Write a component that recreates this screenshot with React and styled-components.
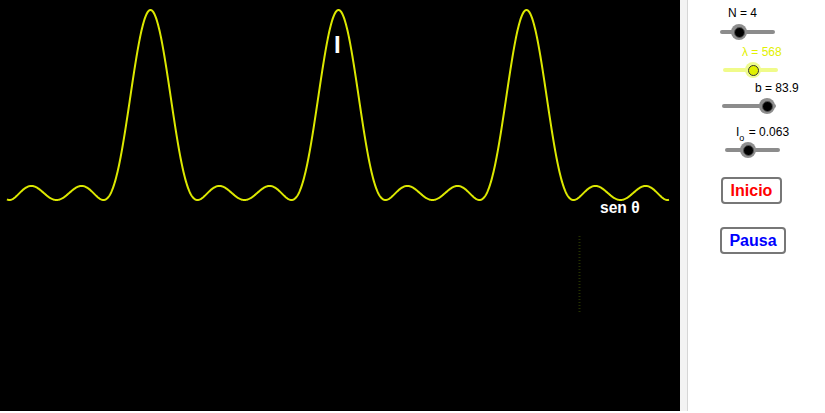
import React from "react";
import styled, { createGlobalStyle } from "styled-components";

const Global = createGlobalStyle`
  html, body { margin: 0; padding: 0; background: #fff; overflow: hidden; }
  body { font-family: "Liberation Sans", Arial, sans-serif; }
`;

const CURVE = "rgb(220,232,0)";

function buildPath() {
  const pts = [];
  for (let x = 7; x <= 669; x += 0.5) {
    const phi = (2 * Math.PI * (x - 150.5)) / 188;
    const s = Math.sin(phi / 2);
    let I;
    if (Math.abs(s) < 1e-6) I = 1;
    else I = Math.pow(Math.sin(2 * phi), 2) / (s * s) / 16;
    const y = 200 - 190 * I;
    pts.push(`${x.toFixed(1)},${y.toFixed(2)}`);
  }
  return "M" + pts.join(" L");
}
const PATH = buildPath();

const Page = styled.div`
  display: flex;
  width: 825px;
  height: 411px;
`;

const Canvas = styled.div`
  width: 680px;
  height: 411px;
  background: #000;
  flex: none;
`;

const Strip = styled.div`
  width: 7px;
  height: 411px;
  background: #f3f3f3;
  border-right: 1px solid #d6d6d6;
  flex: none;
`;

const Sidebar = styled.div`
  flex: 1;
  height: 411px;
  background: #fff;
  display: flex;
  flex-direction: column;
  align-items: flex-start;
  padding-top: 6px;
  box-sizing: border-box;
`;

const Label = styled.div`
  margin-left: ${(p) => p.$x}px;
  margin-top: ${(p) => p.$mt || 0}px;
  height: 14px;
  line-height: 14px;
  font-size: 12px;
  color: ${(p) => p.$color || "#000"};
  white-space: nowrap;
`;

const Sub = styled.span`
  font-size: 9px;
  position: relative;
  top: 5px;
  line-height: 0;
  margin-right: 1px;
`;

const SliderBox = styled.div`
  position: relative;
  margin-left: ${(p) => p.$x}px;
  margin-top: ${(p) => p.$mt}px;
  width: ${(p) => p.$w}px;
  height: 16px;
`;

const Track = styled.div`
  position: absolute;
  left: 0;
  right: 0;
  top: 6px;
  height: 4px;
  border-radius: 2px;
  background: ${(p) => (p.$yellow ? "#f0fb8a" : "#8c8c8c")};
`;

const Thumb = styled.div`
  position: absolute;
  top: 0;
  left: ${(p) => p.$pos - 8}px;
  width: 16px;
  height: 16px;
  border-radius: 50%;
  box-sizing: border-box;
  background: ${(p) => (p.$yellow ? "#eefb90" : "#8e8e8e")};
  display: flex;
  align-items: center;
  justify-content: center;
  &::after {
    content: "";
    width: 11px;
    height: 11px;
    border-radius: 50%;
    box-sizing: border-box;
    background: ${(p) => (p.$yellow ? "#e0f000" : "#000")};
    border: ${(p) => (p.$yellow ? "1px solid #333" : "1px solid #555")};
  }
`;

const Button = styled.button`
  margin-left: ${(p) => p.$x}px;
  margin-top: ${(p) => p.$mt}px;
  width: ${(p) => p.$w}px;
  height: 27px;
  padding: 0;
  box-sizing: border-box;
  background: #fff;
  border: 2px solid #777;
  border-radius: 4px;
  font-family: "Liberation Sans", Arial, sans-serif;
  font-weight: bold;
  font-size: 16px;
  line-height: 22px;
  color: ${(p) => p.$color};
  cursor: pointer;
`;

function Slider({ x, mt, w, pos, yellow }) {
  return (
    <SliderBox $x={x} $mt={mt} $w={w}>
      <Track $yellow={yellow} />
      <Thumb $pos={pos} $yellow={yellow} />
    </SliderBox>
  );
}

export default function App() {
  return (
    <>
      <Global />
      <Page>
        <Canvas>
          <svg width="680" height="411" viewBox="0 0 680 411">
            <path d={PATH} fill="none" stroke={CURVE} strokeWidth="2" strokeLinejoin="round" />
            <text
              x="334"
              y="52.5"
              fill="#fff"
              fontFamily="Liberation Sans, Arial, sans-serif"
              fontWeight="bold"
              fontSize="24"
            >
              I
            </text>
            <text
              x="600"
              y="212.5"
              fill="#fff"
              fontFamily="Liberation Sans, Arial, sans-serif"
              fontWeight="bold"
              fontSize="15.6"
            >
              sen θ
            </text>
            <line
              x1="579.5"
              y1="236"
              x2="579.5"
              y2="313"
              stroke="#243000"
              strokeWidth="2"
              strokeDasharray="1 2"
            />
          </svg>
        </Canvas>
        <Strip />
        <Sidebar>
          <Label $x={40}>N = 4</Label>
          <Slider x={32} mt={4} w={55} pos={19} />
          <Label $x={54} $mt={5} $color="#e2f000">λ = 568</Label>
          <Slider x={35} mt={3} w={55} pos={30} yellow />
          <Label $x={67} $mt={3}>b = 83.9</Label>
          <Slider x={34} mt={3} w={54} pos={45} />
          <Label $x={48} $mt={11}>
            I<Sub>o</Sub> = 0.063
          </Label>
          <Slider x={37} mt={3} w={55} pos={23} />
          <Button $x={33} $mt={19} $w={61} $color="#ff0000">Inicio</Button>
          <Button $x={32} $mt={23} $w={66} $color="#0000ff">Pausa</Button>
        </Sidebar>
      </Page>
    </>
  );
}
